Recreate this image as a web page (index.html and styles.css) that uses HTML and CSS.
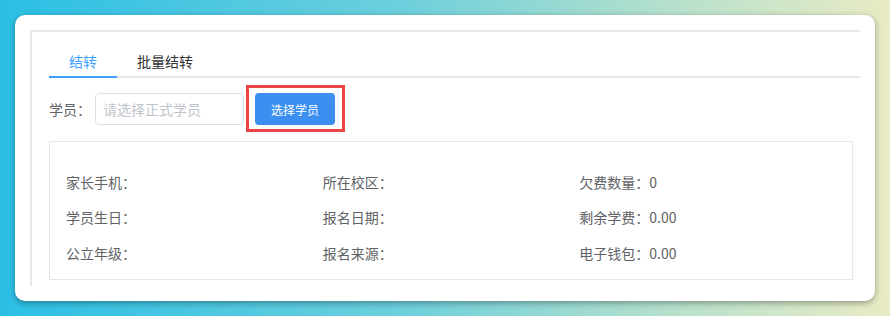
FILE: index.html
```html
<!DOCTYPE html>
<html lang="zh-CN">
<head>
  <meta charset="UTF-8">
  <meta name="viewport" content="width=device-width, initial-scale=1.0">
  <title>结转</title>
  <link rel="stylesheet" href="styles.css">
</head>
<body>
  <div class="card">
    <div class="panel">
      <div class="tabs">
        <div class="tab active">结转</div>
        <div class="tab">批量结转</div>
      </div>

      <div class="form-row">
        <label class="form-label">学员：</label>
        <input class="student-input" type="text" placeholder="请选择正式学员">
        <!-- red frame marks the button -->
        <span class="highlight">
          <button class="pick-button">选择学员</button>
        </span>
      </div>

      <div class="info-box">
        <div class="info-item">家长手机：</div>
        <div class="info-item">所在校区：</div>
        <div class="info-item">欠费数量：0</div>
        <div class="info-item">学员生日：</div>
        <div class="info-item">报名日期：</div>
        <div class="info-item">剩余学费：0.00</div>
        <div class="info-item">公立年级：</div>
        <div class="info-item">报名来源：</div>
        <div class="info-item">电子钱包：0.00</div>
      </div>
    </div>
  </div>
</body>
</html>
```

FILE: styles.css
```css
* {
  margin: 0;
  padding: 0;
  box-sizing: border-box;
}

body {
  font-family: "Noto Sans CJK SC", "Liberation Sans", sans-serif;
  font-size: 14px;
  color: #606266;
  height: 316px;
  overflow: hidden;
  background: linear-gradient(90deg, #2bbfe5 0%, #6ccfdc 45%, #b5e0cc 75%, #e9ebc4 100%);
}

.card {
  margin: 15px;
  height: 286px;
  padding: 15px;
  background-color: #fff;
  border-radius: 10px;
  box-shadow: 0 2px 6px rgba(0, 0, 0, 0.35);
}

.panel {
  height: 100%;
  overflow: hidden;
  border-top: 2px solid #e8e8e8;
  border-left: 2px solid #e8e8e8;
  padding: 15px 0 0 17px;
}

/* tabs */
.tabs {
  display: flex;
  border-bottom: 2px solid #e4e7ed;
}

.tab {
  padding: 0 20px;
  line-height: 29px;
  color: #303133;
  margin-bottom: -2px;
  border-bottom: 2px solid transparent;
}

.tab.active {
  color: #409eff;
  border-bottom-color: #409eff;
}

/* student row */
.form-row {
  display: flex;
  align-items: center;
  margin-top: 15px;
}

.form-label {
  width: 46px;
  color: #606266;
}

.student-input {
  width: 149px;
  height: 32px;
  padding: 0 7px;
  border: 1px solid #dcdfe6;
  border-radius: 4px;
  font-family: inherit;
  font-size: 14px;
  color: #606266;
  outline: none;
}

.student-input::placeholder {
  color: #c0c4cc;
}

.highlight {
  display: flex;
  margin: -8px 0 -7px 2px;
  padding: 5px 7px 4px 6px;
  border: 3px solid #e94545;
}

.pick-button {
  width: 80px;
  height: 32px;
  border: none;
  border-radius: 4px;
  background-color: #3b8ff0;
  color: #fff;
  font-family: inherit;
  font-size: 12px;
}

/* info box */
.info-box {
  margin: 16px 7px 0 0;
  border: 1px solid #e6e6e6;
  padding: 22px 16px 8px;
  display: grid;
  grid-template-columns: repeat(3, 1fr);
  grid-auto-rows: 35.5px;
  align-items: center;
}
```
